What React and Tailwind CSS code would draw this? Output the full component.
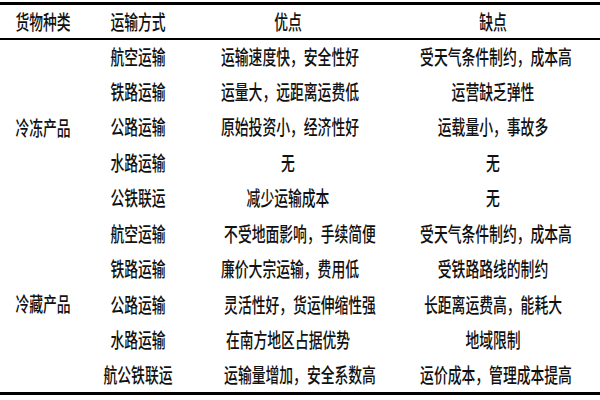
const rows = [
  { kind: '冷冻产品', span: 5, mode: '航空运输', pro: '运输速度快，安全性好', con: '受天气条件制约，成本高' },
  { mode: '铁路运输', pro: '运量大，远距离运费低', con: '运营缺乏弹性' },
  { mode: '公路运输', pro: '原始投资小，经济性好', con: '运载量小，事故多' },
  { mode: '水路运输', pro: '无', con: '无' },
  { mode: '公铁联运', pro: '减少运输成本', con: '无' },
  { kind: '冷藏产品', span: 5, mode: '航空运输', pro: '不受地面影响，手续简便', con: '受天气条件制约，成本高' },
  { mode: '铁路运输', pro: '廉价大宗运输，费用低', con: '受铁路路线的制约' },
  { mode: '公路运输', pro: '灵活性好，货运伸缩性强', con: '长距离运费高，能耗大' },
  { mode: '水路运输', pro: '在南方地区占据优势', con: '地域限制' },
  { mode: '航公铁联运', pro: '运输量增加，安全系数高', con: '运价成本，管理成本提高' },
]

function T({ children }) {
  return <span className="inline-block scale-x-[0.69] whitespace-nowrap">{children}</span>
}

export default function App() {
  return (
    <div
      className="w-[600px] h-[400px] bg-white pt-[2px] text-[#111] text-[20px] font-medium leading-none overflow-hidden"
      style={{ fontFamily: '"Noto Sans CJK SC", "Noto Sans", sans-serif' }}
    >
      <table className="w-[600px] table-fixed border-collapse border-t-[3px] border-b-[3px] border-black">
        <colgroup>
          <col className="w-[86px]" />
          <col className="w-[104px]" />
          <col className="w-[196px]" />
          <col className="w-[214px]" />
        </colgroup>
        <thead>
          <tr className="h-[35px] border-b-2 border-black">
            <th className="font-medium text-center pt-[2px]"><T>货物种类</T></th>
            <th className="font-medium text-center pt-[2px]"><T>运输方式</T></th>
            <th className="font-medium text-center pt-[2px]"><T>优点</T></th>
            <th className="font-medium text-center pt-[2px]"><T>缺点</T></th>
          </tr>
        </thead>
        <tbody>
          {rows.map((r, i) => (
            <tr key={i} className="h-[35.5px]">
              {r.kind && (
                <td rowSpan={r.span} className="text-center align-middle">
                  <T>{r.kind}</T>
                </td>
              )}
              <td className="text-center"><T>{r.mode}</T></td>
              <td className="text-center"><T>{r.pro}</T></td>
              <td className="text-center"><T>{r.con}</T></td>
            </tr>
          ))}
        </tbody>
      </table>
    </div>
  )
}
